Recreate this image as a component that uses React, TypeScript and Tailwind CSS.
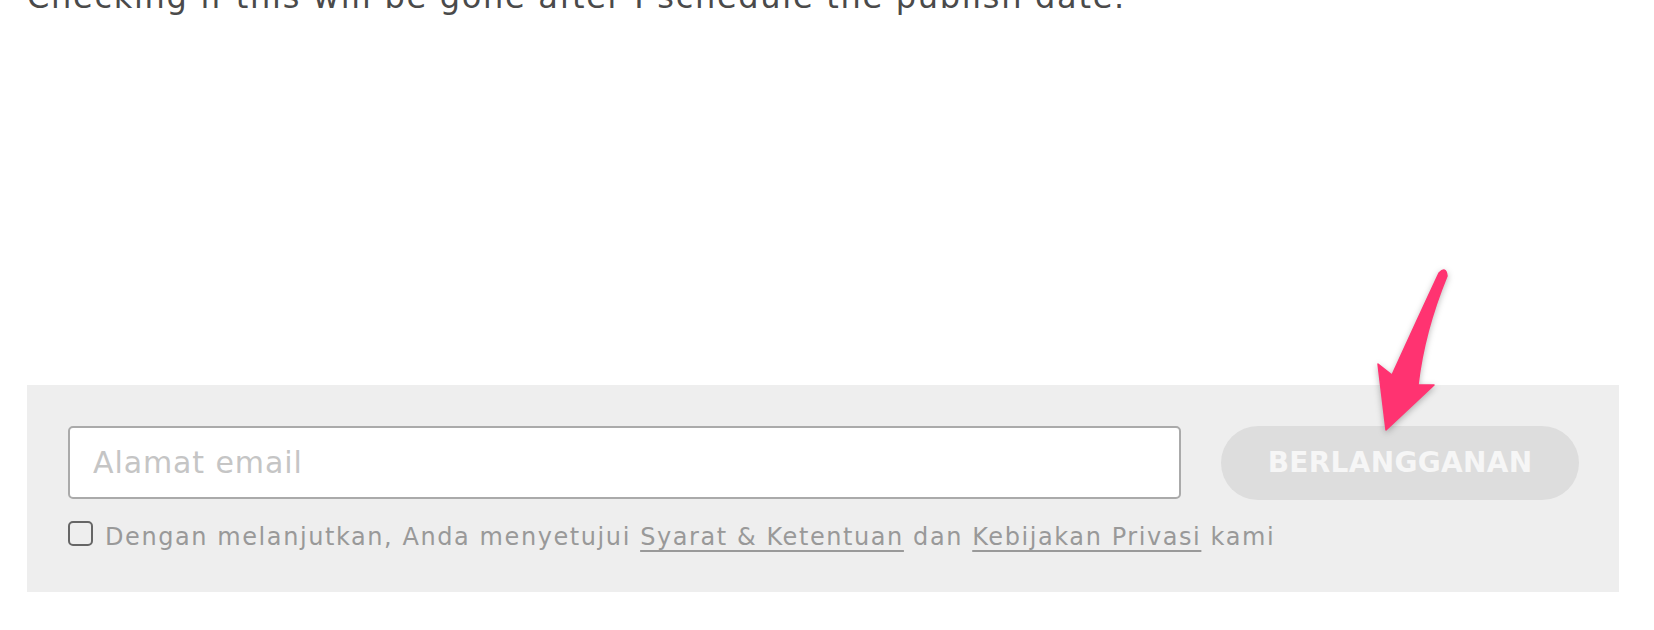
import React from 'react';

const font = { fontFamily: '"DejaVu Sans", "Liberation Sans", sans-serif' };

const Arrow = () => (
  <svg
    className="absolute left-0 top-0 pointer-events-none drop-shadow-[0_2px_3px_rgba(0,0,0,0.28)]"
    width="1654"
    height="630"
    viewBox="0 0 1654 630">
    <path
      d="M1439 273 Q1418 318 1392 375 L1378 364 L1386 430 L1434 385 L1418 385 Q1424 332 1447 276 Q1446 266 1439 273 Z"
      fill="#ff3371"
      stroke="#ff3371"
      strokeWidth="1.5"
      strokeLinejoin="round" />
  </svg>
);

const App = () => {
  return (
    <div className="relative w-[1654px] h-[630px] bg-white overflow-hidden" style={font}>
      {/* Article text, cut off by the top of the window */}
      <p className="-mt-[23px] pl-[27px] text-[32px] leading-[40px] tracking-[1.7px] text-[#4a4a4a] whitespace-nowrap">
        Checking if this will be gone after I schedule the publish date.
      </p>

      {/* Newsletter box */}
      <div className="ml-[27px] mt-[368px] w-[1592px] bg-[#eeeeee] pl-[41px] pr-[40px] pt-[41px] pb-[40px]">
        <div className="flex gap-[40px]">
          <input
            type="email"
            placeholder="Alamat email"
            className="flex-1 h-[73px] rounded-[5px] border-2 border-[#aaaaaa] bg-white px-[23px] text-[30px] tracking-[0.9px] text-[#444] outline-none placeholder:text-[#c5c5c5]" />

          <button className="w-[358px] h-[74px] rounded-full bg-[#dddddd] text-[#f6f6f6] text-[28px] tracking-[0.3px] font-bold">
            BERLANGGANAN
          </button>
        </div>

        <div className="mt-[22px] flex items-start gap-[12px]">
          <span className="mt-[-1px] w-[25px] h-[25px] rounded-[5px] border-2 border-[#666666] shrink-0" />
          <p className="text-[24px] leading-[30px] tracking-[1.58px] text-[#999999] whitespace-nowrap">
            Dengan melanjutkan, Anda menyetujui{' '}
            <a href="#" className="underline underline-offset-[5px]">Syarat &amp; Ketentuan</a> dan{' '}
            <a href="#" className="underline underline-offset-[5px]">Kebijakan Privasi</a> kami
          </p>
        </div>
      </div>

      <Arrow />
    </div>);

};

export default App;
